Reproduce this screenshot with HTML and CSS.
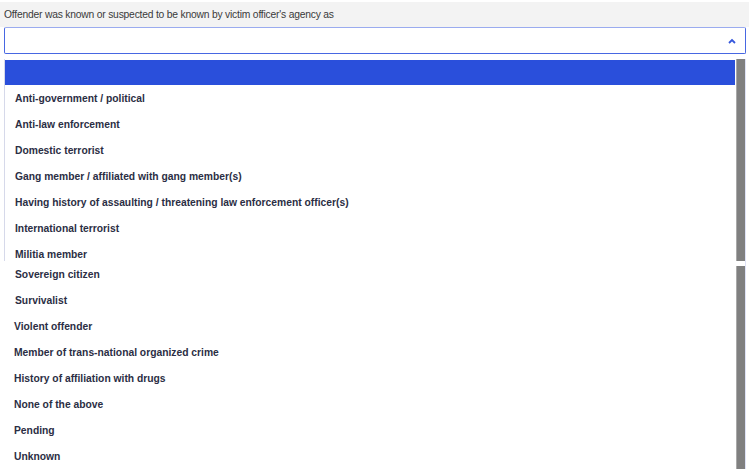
FILE: index.html
```html
<html>
    <head>
        <title>Agencia</title>
        <link rel="stylesheet" href="styles.css">
    </head>
    <body>
        <!-- Etiqueta del campo -->
        <div class="Cabecera">
            <label class="Etiqueta">Offender was known or suspected to be known by victim officer's agency as</label>
        </div>

        <!-- Selector abierto -->
        <div class="Selector">
            <span class="Valor"></span>
            <svg class="Flecha" width="8" height="6" viewBox="0 0 8 6">
                <polyline points="1,5 4,2 7,5" fill="none" stroke="#3557dc" stroke-width="1.8"/>
            </svg>
        </div>

        <!-- Lista de opciones (parte superior) -->
        <div class="Lista Primera">
            <div class="Opciones">
                <div class="Opcion Activa"></div>
                <div class="Opcion">Anti-government / political</div>
                <div class="Opcion">Anti-law enforcement</div>
                <div class="Opcion">Domestic terrorist</div>
                <div class="Opcion">Gang member / affiliated with gang member(s)</div>
                <div class="Opcion">Having history of assaulting / threatening law enforcement officer(s)</div>
                <div class="Opcion">International terrorist</div>
                <div class="Opcion">Militia member</div>
            </div>
            <div class="Barra"></div>
        </div>

        <!-- Lista de opciones (parte inferior) -->
        <div class="Lista Segunda">
            <div class="Opciones">
                <div class="Opcion">Sovereign citizen</div>
                <div class="Opcion">Survivalist</div>
                <div class="Opcion Corrida">Violent offender</div>
                <div class="Opcion Corrida">Member of trans-national organized crime</div>
                <div class="Opcion Corrida">History of affiliation with drugs</div>
                <div class="Opcion Corrida">None of the above</div>
                <div class="Opcion Corrida">Pending</div>
                <div class="Opcion Corrida">Unknown</div>
            </div>
            <div class="Barra"></div>
        </div>
    </body>
</html>
```

FILE: styles.css
```css
body{
    margin: 0;
    background-color: white;
    font-family: "Liberation Sans", Arial, sans-serif;
    overflow: hidden;
}

.Cabecera{
    background-color: #f3f3f3;
    height: 25px;
    margin-top: 2px;
    padding-left: 4px;
    display: flex;
    align-items: flex-start;
}

.Etiqueta{
    font-size: 10.3px;
    letter-spacing: -0.2px;
    color: #3a3a3a;
    margin-top: 7px;
}

.Selector{
    margin: 0 3px 0 4px;
    height: 25px;
    border: 1px solid #4767e2;
    border-top-color: #9aabef;
    border-radius: 2px;
    display: flex;
    align-items: center;
    justify-content: flex-end;
    padding-right: 9px;
}

.Lista{
    display: flex;
    margin-right: 3px;
}

.Primera{
    margin-top: 5px;
    margin-left: 4px;
    height: 202px;
    overflow: hidden;
    border-left: 1px solid #d6d9ea;
    border-right: 1px solid #dfe3f7;
}

.Segunda{
    height: 208px;
    border-right: 1px solid #dfe3f7;
}

.Opciones{
    flex: 1;
}

.Opcion{
    height: 26px;
    display: flex;
    align-items: center;
    padding-left: 10px;
    padding-top: 1px;
    box-sizing: border-box;
    font-size: 10.3px;
    font-weight: bold;
    color: #2b2e44;
}

.Segunda .Opcion{
    padding-left: 15px;
    padding-top: 0;
}

.Segunda .Corrida{
    padding-left: 14px;
}

.Activa{
    background-color: #2a4fdb;
    height: 25px;
    margin-top: 1px;
}

.Barra{
    width: 8px;
    background-color: #808080;
    border-left: 1px solid #a9a9a9;
    margin-left: 1px;
}

.Segunda .Barra{
    margin-top: 5px;
}
```
